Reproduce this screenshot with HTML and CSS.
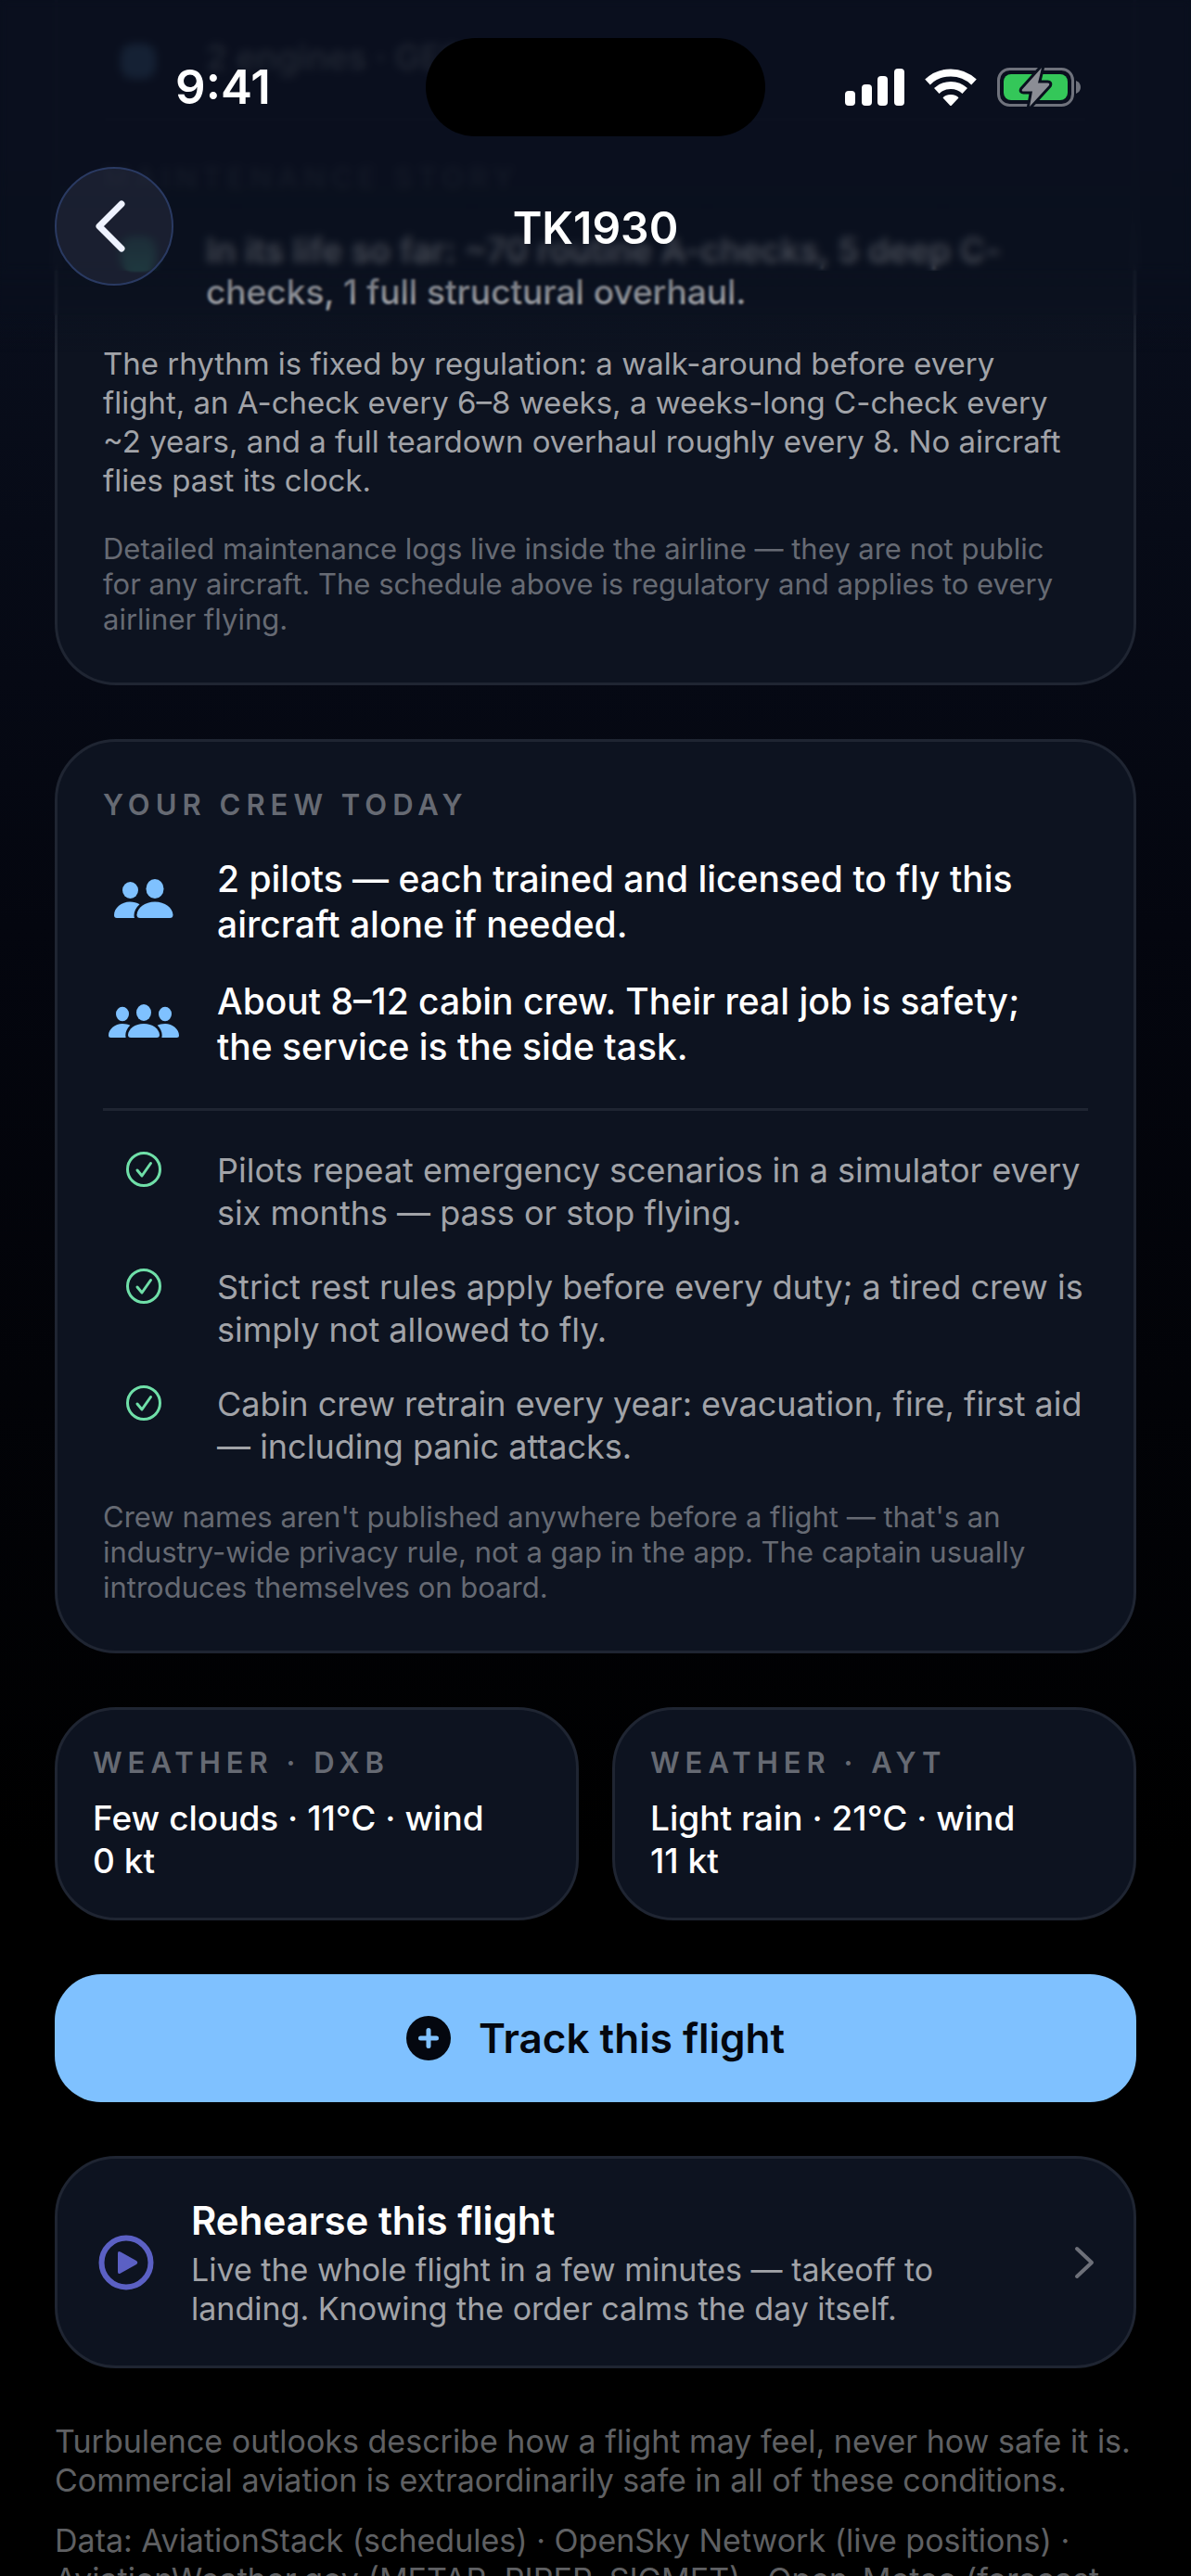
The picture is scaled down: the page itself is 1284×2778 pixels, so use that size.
FILE: index.html
```
<!DOCTYPE html>
<html lang="en">
<head>
  <meta charset="UTF-8">
  <meta name="viewport" content="width=device-width, initial-scale=1.0">
  <title>TK1930</title>
  <link rel="stylesheet" href="styles.css">
</head>
<body>
  <!-- Header -->
  <header class="top-bar">
    <div class="haze haze-dim"></div>
    <div class="haze haze-soft"></div>
    <div class="haze haze-strong"></div>

    <div class="status-bar">
      <div class="status-time">9:41</div>
      <div class="island"></div>
      <div class="status-icons">
        <svg width="64" height="40" viewBox="0 0 64 40" fill="#fff" aria-hidden="true">
          <rect x="0" y="24" width="11" height="16" rx="4"/>
          <rect x="18" y="17" width="11" height="23" rx="4"/>
          <rect x="35" y="8" width="11" height="32" rx="4"/>
          <rect x="53" y="0" width="11" height="40" rx="4"/>
        </svg>
        <svg width="56" height="41" viewBox="0 0 56 41" aria-hidden="true">
          <g fill="none" stroke="#fff" stroke-width="8">
            <path d="M3 14.500 A36 36 0 0 1 53 14.500"/>
            <path d="M12.800 24 A22 22 0 0 1 43.200 24"/>
          </g>
          <path d="M28 28 C32 28 35 29.500 36.500 31.500 L29 39.500 Q28 40.600 27 39.500 L19.500 31.500 C21 29.500 24 28 28 28 Z" fill="#fff"/>
        </svg>
        <svg width="92" height="44" viewBox="0 0 92 44" aria-hidden="true">
          <rect x="1.500" y="2.500" width="80" height="39" rx="12" fill="none" stroke="#6f727c" stroke-width="3"/>
          <rect x="7" y="8" width="69" height="28" rx="8" fill="#34c759"/>
          <path d="M85 15 Q90 17 90 22 Q90 27 85 29 Z" fill="#6f727c"/>
          <path d="M48 1 L27 24.500 Q26 26.500 28.500 26.500 H38 L35 43 L56 20 Q57 17.500 54.500 17.500 H44 Z" fill="#8b8d95" stroke="#0a101e" stroke-width="6" paint-order="stroke" stroke-linejoin="round"/>
        </svg>
      </div>
    </div>

    <nav class="nav-bar">
      <button type="button" class="back-button" aria-label="Back">
        <svg width="34" height="56" viewBox="0 0 34 56" fill="none" stroke="#eef2ff" stroke-width="7" stroke-linecap="round" stroke-linejoin="round" aria-hidden="true">
          <path d="M29 4 L5 28 L29 52"/>
        </svg>
      </button>
      <h1 class="nav-title">TK1930</h1>
    </nav>
  </header>

  <main class="content">
    <!-- Aircraft and maintenance -->
    <section class="card card-aircraft">
      <div class="row row-aircraft">
        <span class="row-icon"><span class="dot dot-blue"></span></span>
        <p class="row-text">2 engines · GE90</p>
      </div>
      <h2 class="card-title card-title-next">MAINTENANCE STORY</h2>
      <div class="row row-aircraft row-story">
        <span class="row-icon"><span class="dot dot-green"></span></span>
        <p class="row-text">In its life so far: ~70 routine A-checks, 5 deep C-checks, 1 full structural overhaul.</p>
      </div>
      <p class="body-text">The rhythm is fixed by regulation: a walk-around before every flight, an A-check every 6–8 weeks, a weeks-long C-check every ~2 years, and a full teardown overhaul roughly every 8. No aircraft flies past its clock.</p>
      <p class="note">Detailed maintenance logs live inside the airline — they are not public for any aircraft. The schedule above is regulatory and applies to every airliner flying.</p>
    </section>

    <!-- Crew -->
    <section class="card">
      <h2 class="card-title">YOUR CREW TODAY</h2>
      <div class="crew">
        <div class="row">
          <span class="row-icon">
            <svg width="64" height="42" viewBox="0 0 64 42" fill="#7fc1ff" aria-hidden="true">
              <ellipse cx="17.500" cy="12" rx="8.500" ry="9"/>
              <path d="M3 42 Q0 42 0 39 C0 31 8 24.500 17 24.500 C21 24.500 24.500 25.500 27.500 27.200 C23.500 30.500 21.500 35 21.500 39 Q21.500 41 22 42 Z"/>
              <ellipse cx="44" cy="10.500" rx="9.500" ry="10.500"/>
              <path d="M28 42 Q24.500 42 24.500 38.500 C25 31 33 24.500 44 24.500 C55 24.500 63 31 63.500 38.500 Q63.500 42 60 42 Z"/>
            </svg>
          </span>
          <p class="row-text">2 pilots — each trained and licensed to fly this aircraft alone if needed.</p>
        </div>
        <div class="row">
          <span class="row-icon">
            <svg width="76" height="36" viewBox="0 0 76 36" fill="#7fc1ff" aria-hidden="true">
              <ellipse cx="15" cy="10.500" rx="7" ry="7.800"/>
              <path d="M2.500 36 Q0 36 0 33.500 C0 27 7 21 15 21 C18.500 21 21 21.700 23.300 22.800 C20 26 18.300 30 18.300 33.500 L18.600 36 Z"/>
              <ellipse cx="61" cy="10.500" rx="7" ry="7.800"/>
              <path d="M73.500 36 Q76 36 76 33.500 C76 27 69 21 61 21 C57.500 21 55 21.700 52.700 22.800 C56 26 57.700 30 57.700 33.500 L57.400 36 Z"/>
              <ellipse cx="38" cy="9" rx="8" ry="9"/>
              <path d="M24 36 Q21 36 21 33 C21.500 26.500 28.500 21 38 21 C47.500 21 54.500 26.500 55 33 Q55 36 52 36 Z"/>
            </svg>
          </span>
          <p class="row-text">About 8–12 cabin crew. Their real job is safety; the service is the side task.</p>
        </div>
      </div>
      <ul class="checks">
        <li class="row">
          <span class="row-icon row-icon-check">
            <svg width="38" height="38" viewBox="0 0 38 38" fill="none" stroke="#6fdfa8" stroke-width="3" stroke-linecap="round" stroke-linejoin="round" aria-hidden="true">
              <circle cx="19" cy="19" r="17.500"/>
              <path d="M12 20 L17 26 L26.500 12.500"/>
            </svg>
          </span>
          <p class="check-text">Pilots repeat emergency scenarios in a simulator every six months — pass or stop flying.</p>
        </li>
        <li class="row">
          <span class="row-icon row-icon-check">
            <svg width="38" height="38" viewBox="0 0 38 38" fill="none" stroke="#6fdfa8" stroke-width="3" stroke-linecap="round" stroke-linejoin="round" aria-hidden="true">
              <circle cx="19" cy="19" r="17.500"/>
              <path d="M12 20 L17 26 L26.500 12.500"/>
            </svg>
          </span>
          <p class="check-text">Strict rest rules apply before every duty; a tired crew is simply not allowed to fly.</p>
        </li>
        <li class="row">
          <span class="row-icon row-icon-check">
            <svg width="38" height="38" viewBox="0 0 38 38" fill="none" stroke="#6fdfa8" stroke-width="3" stroke-linecap="round" stroke-linejoin="round" aria-hidden="true">
              <circle cx="19" cy="19" r="17.500"/>
              <path d="M12 20 L17 26 L26.500 12.500"/>
            </svg>
          </span>
          <p class="check-text">Cabin crew retrain every year: evacuation, fire, first aid — including panic attacks.</p>
        </li>
      </ul>
      <p class="note">Crew names aren't published anywhere before a flight — that's an industry-wide privacy rule, not a gap in the app. The captain usually introduces themselves on board.</p>
    </section>

    <!-- Weather -->
    <div class="weather">
      <section class="card card-small">
        <h2 class="card-title">WEATHER · DXB</h2>
        <p class="weather-text">Few clouds · 11°C · wind<br>0 kt</p>
      </section>
      <section class="card card-small">
        <h2 class="card-title">WEATHER · AYT</h2>
        <p class="weather-text">Light rain · 21°C · wind<br>11 kt</p>
      </section>
    </div>

    <button type="button" class="track-button">
      <svg width="48" height="48" viewBox="0 0 48 48" aria-hidden="true">
        <circle cx="24" cy="24" r="24" fill="#04070f"/>
        <path d="M24 15.500 V32.500 M15.500 24 H32.500" stroke="#7fc1ff" stroke-width="5" stroke-linecap="round"/>
      </svg>
      <span>Track this flight</span>
    </button>

    <a href="#rehearse" class="card rehearse">
      <svg width="60" height="60" viewBox="0 0 60 60" aria-hidden="true">
        <circle cx="30" cy="30" r="26.500" fill="none" stroke="#5b60c4" stroke-width="6"/>
        <path d="M21 20 Q21 17 24 18.500 L41 28 Q43.500 30 41 32 L24 41.500 Q21 43 21 40 Z" fill="#5b60c4"/>
      </svg>
      <span class="rehearse-text">
        <strong class="rehearse-title">Rehearse this flight</strong>
        <span class="rehearse-body">Live the whole flight in a few minutes — takeoff to landing. Knowing the order calms the day itself.</span>
      </span>
      <svg width="22" height="36" viewBox="0 0 22 36" fill="none" stroke="#6d7079" stroke-width="4" stroke-linecap="round" stroke-linejoin="round" aria-hidden="true">
        <path d="M3 3 L19 18 L3 33"/>
      </svg>
    </a>

    <footer class="footer">
      <p>Turbulence outlooks describe how a flight may feel, never how safe it is. Commercial aviation is extraordinarily safe in all of these conditions.</p>
      <p>Data: AviationStack (schedules) · OpenSky Network (live positions) · AviationWeather.gov (METAR, PIREP, SIGMET) · Open-Meteo (forecast</p>
    </footer>
  </main>
</body>
</html>
```
FILE: styles.css
```
/* General Styles */
* {
  box-sizing: border-box;
}

body {
  font-family: Inter, "Liberation Sans", sans-serif;
  background: linear-gradient(#0b1120 0, #090e1c 300px, #04060f 1000px, #000 2000px);
  color: #fff;
  margin: 0;
  height: 100vh;
  overflow: hidden;
}

h1,
h2,
p,
ul {
  margin: 0;
  padding: 0;
}

/* Header */
.top-bar {
  position: fixed;
  top: 0;
  left: 0;
  right: 0;
  height: 340px;
  z-index: 2;
}

.haze {
  position: absolute;
  top: 0;
  left: 0;
  right: 0;
}

.haze-soft {
  height: 340px;
  backdrop-filter: blur(1px);
}

.haze-strong {
  height: 292px;
  backdrop-filter: blur(4px);
}

.haze-dim {
  height: 380px;
  background: linear-gradient(rgba(10, 16, 30, 0.9) 0, rgba(10, 16, 30, 0.9) 200px, rgba(10, 16, 30, 0.75) 270px, rgba(10, 16, 30, 0.5) 315px, rgba(10, 16, 30, 0) 380px);
}

.status-bar {
  position: relative;
  display: grid;
  grid-template-columns: 1fr 366px 1fr;
  align-items: center;
  padding-top: 41px;
}

.status-time {
  font-size: 51px;
  font-weight: 600;
  line-height: 60px;
  padding-left: 22px;
  text-align: center;
}

.island {
  height: 106px;
  border-radius: 53px;
  background: #000;
}

.status-icons {
  display: flex;
  align-items: center;
  justify-content: center;
  gap: 22px;
  padding-right: 32px;
}

.nav-bar {
  position: relative;
  display: grid;
  grid-template-columns: 128px 1fr 128px;
  align-items: center;
  padding: 33px 59px 0;
}

.back-button {
  display: flex;
  align-items: center;
  justify-content: center;
  width: 128px;
  height: 128px;
  padding: 0 8px 0 0;
  border: 2px solid #2a3a62;
  border-radius: 50%;
  background: rgba(36, 41, 60, 0.6);
  cursor: pointer;
}

.nav-title {
  padding-top: 3px;
  font-size: 48px;
  font-weight: 600;
  line-height: 60px;
  text-align: center;
}

/* Cards */
.content {
  display: flex;
  flex-direction: column;
  gap: 58px;
  padding: 0 59px;
}

.card {
  padding: 49px;
  background: #0d1320;
  border: 3px solid #1f2532;
  border-radius: 66px;
}

.card-aircraft {
  padding-top: 39px;
  border-top: none;
  border-radius: 0 0 66px 66px;
}

.card-title {
  font-size: 31px;
  font-weight: 600;
  line-height: 38px;
  letter-spacing: 6px;
  color: #666a73;
}

.card-title-next {
  margin-top: 34px;
  padding-top: 43px;
  border-top: 3px solid #1f2532;
}

.row {
  display: flex;
  gap: 36px;
}

.row-icon {
  display: flex;
  flex: none;
  align-items: center;
  justify-content: center;
  width: 87px;
  height: 92px;
}

.row-icon-check {
  height: 44px;
}

.row-text {
  padding-right: 12px;
  font-size: 39px;
  font-weight: 500;
  line-height: 49px;
}

.row-aircraft .row-icon {
  width: 75px;
  height: 54px;
}

.row-aircraft .row-text {
  font-size: 37px;
  line-height: 45px;
}

.row-story {
  margin: 36px 0 34px;
}

.dot {
  width: 38px;
  height: 38px;
  border-radius: 14px;
}

.dot-blue {
  background: #7fc1ff;
}

.dot-green {
  background: #2fbf87;
}

.body-text {
  padding-right: 12px;
  font-size: 33px;
  line-height: 42px;
  color: #a1a3a8;
}

.note {
  margin-top: 34px;
  font-size: 31px;
  line-height: 38px;
  color: #666a73;
}

/* Crew */
.crew {
  display: flex;
  flex-direction: column;
  gap: 34px;
  margin-top: 36px;
  padding-bottom: 42px;
  border-bottom: 3px solid #1f2532;
}

.checks {
  display: flex;
  flex-direction: column;
  gap: 34px;
  margin-top: 41px;
  list-style: none;
}

.check-text {
  font-size: 36px;
  line-height: 46px;
  color: #a1a3a8;
}

/* Weather */
.weather {
  display: grid;
  grid-template-columns: 1fr 1fr;
  gap: 36px;
}

.card-small {
  padding: 38px;
}

.weather-text {
  margin-top: 18px;
  font-size: 37px;
  font-weight: 500;
  line-height: 46px;
}

/* Track Button */
.track-button {
  display: flex;
  align-items: center;
  justify-content: center;
  gap: 30px;
  padding: 39px;
  border: none;
  border-radius: 50px;
  background: #7fc1ff;
  color: #04070f;
  font-family: inherit;
  font-size: 44px;
  font-weight: 600;
  line-height: 60px;
  cursor: pointer;
}

/* Rehearse */
.rehearse {
  display: flex;
  align-items: center;
  gap: 40px;
  padding: 40px 42px 40px 44px;
  color: #fff;
  text-decoration: none;
}

.rehearse-text {
  display: flex;
  flex: 1;
  flex-direction: column;
  gap: 5px;
}

.rehearse-title {
  font-size: 42px;
  font-weight: 600;
  line-height: 54px;
}

.rehearse-body {
  font-size: 34px;
  line-height: 42px;
  color: #a1a3a8;
}

/* Footer */
.footer {
  display: flex;
  flex-direction: column;
  gap: 23px;
  font-size: 34px;
  line-height: 42px;
  color: #5f6063;
}
```
